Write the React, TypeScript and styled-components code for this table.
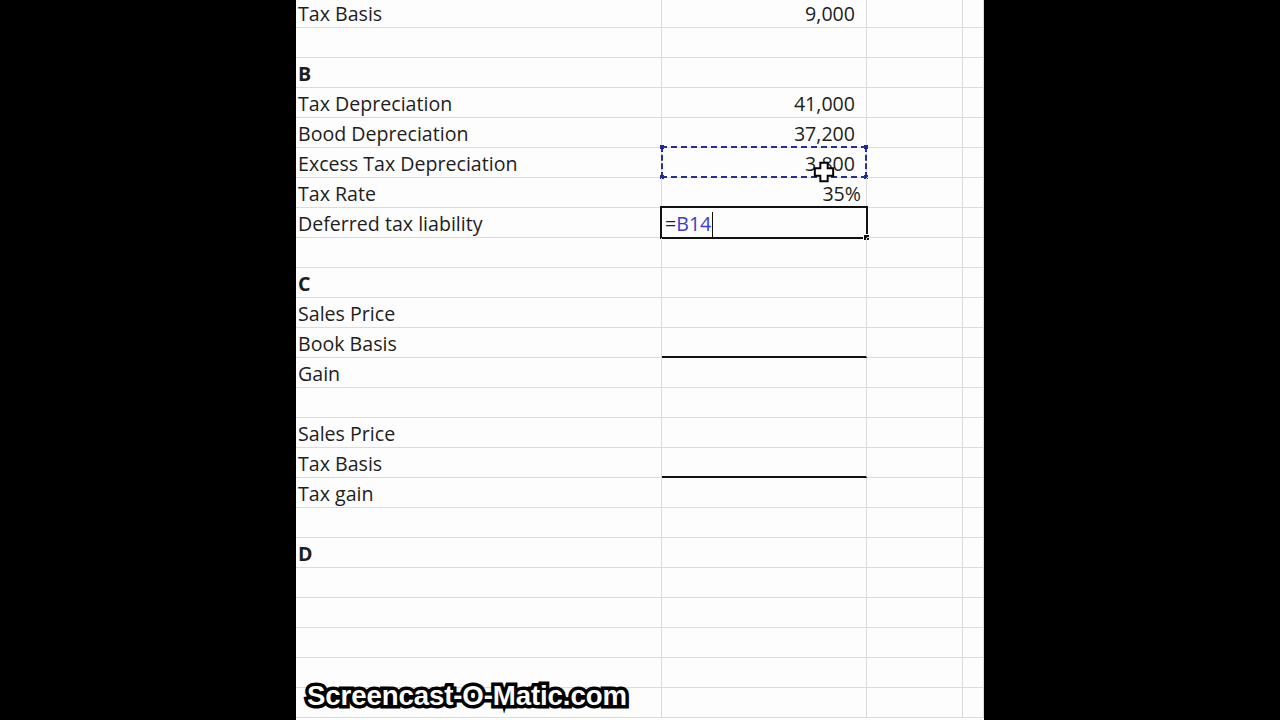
import React from "react";
import styled, { createGlobalStyle } from "styled-components";

const Global = createGlobalStyle`
  html, body { margin: 0; padding: 0; background: #000; }
  body { width: 1280px; height: 720px; overflow: hidden; }
`;

const Stage = styled.div`
  width: 1280px;
  height: 720px;
  display: flex;
  justify-content: center;
  background: #000;
  position: relative;
`;

const Sheet = styled.div`
  width: 688px;
  height: 720px;
  background: #fdfdfd;
  overflow: hidden;
`;

const Grid = styled.div`
  margin-top: -2px;
  display: grid;
  grid-template-columns: 366px 205px 96px 21px;
  grid-auto-rows: 30px;
`;

const Cell = styled.div<{ $align?: "left" | "right"; $pad?: number; $bold?: boolean; $under?: boolean }>`
  position: relative;
  box-sizing: border-box;
  border-right: 1px solid #dcdcdc;
  border-bottom: 1px solid ${(p) => (p.$under ? "#111" : "#dcdcdc")};
  ${(p) => (p.$under ? "border-bottom-width: 2px;" : "")}
  display: flex;
  align-items: flex-end;
  justify-content: ${(p) => (p.$align === "right" ? "flex-end" : "flex-start")};
  padding: 0 ${(p) => (p.$align === "right" ? p.$pad ?? 11 : 0)}px 1px ${(p) => (p.$align === "right" ? 0 : 2)}px;
  font-family: "Open Sans", "Liberation Sans", sans-serif;
  font-size: 19.6px;
  font-weight: ${(p) => (p.$bold ? 700 : 400)};
  color: #1e1e1e;
  white-space: nowrap;
  line-height: 24px;
`;

const Ants = styled.div`
  position: absolute;
  left: -1px;
  right: -1px;
  top: -2px;
  bottom: -1px;
  border: 2px dashed #24309a;
  pointer-events: none;
  &::before {
    content: "";
    position: absolute;
    inset: -2px;
    border: 2px solid rgba(235, 230, 110, 0.55);
    z-index: -1;
  }
`;

const Corner = styled.span<{ $x: "l" | "r"; $y: "t" | "b" }>`
  position: absolute;
  width: 4px;
  height: 4px;
  background: #1c2a9a;
  ${(p) => (p.$x === "l" ? "left: -3px;" : "right: -3px;")}
  ${(p) => (p.$y === "t" ? "top: -3px;" : "bottom: -3px;")}
`;

const EditBox = styled.div`
  position: absolute;
  left: -2px;
  right: -2px;
  top: -2px;
  bottom: -2px;
  border: 2px solid #111;
  pointer-events: none;
`;

const FillHandle = styled.span`
  position: absolute;
  right: -4px;
  bottom: -4px;
  width: 5px;
  height: 5px;
  background: #111;
  border: 1px solid #fff;
`;

const EditText = styled.span`
  padding-left: 3px;
  margin-right: auto;
  display: inline-flex;
  align-items: flex-end;
`;

const Ref = styled.span`
  color: #3a3fd0;
`;

const Caret = styled.span`
  display: inline-block;
  width: 1px;
  height: 25px;
  background: #111;
  margin-left: 1px;
  margin-bottom: -1px;
`;

const CursorIcon = styled.svg`
  position: absolute;
  left: 151px;
  top: 13px;
  pointer-events: none;
`;

const Watermark = styled.div`
  position: absolute;
  left: 307px;
  top: 680px;
  font-family: "Liberation Sans", Arial, sans-serif;
  font-weight: 700;
  font-size: 27.6px;
  color: #fff;
  letter-spacing: -0.1px;
  -webkit-text-stroke: 7px #000;
  paint-order: stroke fill;
  text-shadow: 0 0 3px #000;
`;

type Row = {
  a?: string;
  b?: string;
  bold?: boolean;
  under?: boolean;
  pad?: number;
  kind?: "ants" | "edit";
};

const rows: Row[] = [
  { a: "Tax Basis", b: "9,000" },
  {},
  { a: "B", bold: true },
  { a: "Tax Depreciation", b: "41,000" },
  { a: "Bood Depreciation", b: "37,200" },
  { a: "Excess Tax Depreciation", b: "3,800", kind: "ants" },
  { a: "Tax Rate", b: "35%", pad: 5 },
  { a: "Deferred tax liability", kind: "edit" },
  {},
  { a: "C", bold: true },
  { a: "Sales Price" },
  { a: "Book Basis", under: true },
  { a: "Gain" },
  {},
  { a: "Sales Price" },
  { a: "Tax Basis", under: true },
  { a: "Tax gain" },
  {},
  { a: "D", bold: true },
  {},
  {},
  {},
  {},
  {},
];

export default function App() {
  return (
    <Stage>
      <Global />
      <Sheet>
        <Grid>
          {rows.map((r, i) => (
            <React.Fragment key={i}>
              <Cell $bold={r.bold}>{r.a}</Cell>
              <Cell $align="right" $pad={r.pad} $under={r.under}>
                {r.kind === "edit" ? (
                  <>
                    <EditText>
                      =<Ref>B14</Ref>
                      <Caret />
                    </EditText>
                    <EditBox>
                      <FillHandle />
                    </EditBox>
                  </>
                ) : (
                  r.b
                )}
                {r.kind === "ants" && (
                  <>
                    <Ants>
                      <Corner $x="l" $y="t" />
                      <Corner $x="r" $y="t" />
                      <Corner $x="l" $y="b" />
                      <Corner $x="r" $y="b" />
                    </Ants>
                    <CursorIcon width="22" height="22" viewBox="0 0 18 18">
                      <path
                        d="M6 1.5h6v4.5h4.5v6H12v4.5H6V12H1.5V6H6z"
                        fill="#fff"
                        stroke="#000"
                        strokeWidth="1.6"
                      />
                    </CursorIcon>
                  </>
                )}
              </Cell>
              <Cell />
              <Cell />
            </React.Fragment>
          ))}
        </Grid>
      </Sheet>
      <Watermark>Screencast-O-Matic.com</Watermark>
    </Stage>
  );
}
